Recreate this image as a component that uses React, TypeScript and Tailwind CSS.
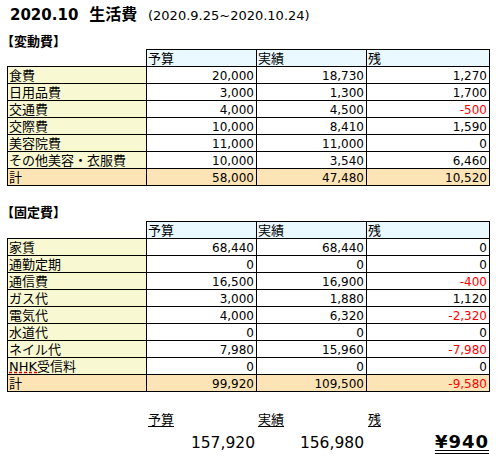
import React from "react";

type Row = { label: string; plan: string; actual: string; rest: string; neg?: boolean; spell?: boolean };

const variable: Row[] = [
  { label: "食費", plan: "20,000", actual: "18,730", rest: "1,270" },
  { label: "日用品費", plan: "3,000", actual: "1,300", rest: "1,700" },
  { label: "交通費", plan: "4,000", actual: "4,500", rest: "-500", neg: true },
  { label: "交際費", plan: "10,000", actual: "8,410", rest: "1,590" },
  { label: "美容院費", plan: "11,000", actual: "11,000", rest: "0" },
  { label: "その他美容・衣服費", plan: "10,000", actual: "3,540", rest: "6,460" },
];

const fixed: Row[] = [
  { label: "家賃", plan: "68,440", actual: "68,440", rest: "0" },
  { label: "通勤定期", plan: "0", actual: "0", rest: "0" },
  { label: "通信費", plan: "16,500", actual: "16,900", rest: "-400", neg: true },
  { label: "ガス代", plan: "3,000", actual: "1,880", rest: "1,120" },
  { label: "電気代", plan: "4,000", actual: "6,320", rest: "-2,320", neg: true },
  { label: "水道代", plan: "0", actual: "0", rest: "0" },
  { label: "ネイル代", plan: "7,980", actual: "15,960", rest: "-7,980", neg: true },
  { label: "NHK受信料", plan: "0", actual: "0", rest: "0", spell: true },
];

const cols = "grid grid-cols-[140px_110px_110px_123px]";
const cell = "h-[17px] border-b border-r border-black flex items-end leading-[13px]";

const Sheet = ({ rows, total }: { rows: Row[]; total: Row }) => (
  <div className="pl-[7px]">
    {/* header */}
    <div className={cols}>
      <div className="h-[18px] border-r border-b border-black" />
      {["予算", "実績", "残"].map((h) => (
        <div key={h} className="h-[18px] border-t border-r border-b border-black bg-[#eaf9ff] flex items-end pl-[1px] text-[13px] leading-[15px]">
          {h}
        </div>
      ))}
    </div>
    {[...rows, total].map((r, i) => {
      const isTotal = i === rows.length;
      const bg = isTotal ? "bg-[#fde4b6]" : "bg-white";
      return (
        <div key={r.label} className={cols}>
          <div className={`${cell} border-l pl-[1px] text-[13px] leading-[15px] whitespace-nowrap ${isTotal ? "bg-[#fde4b6]" : "bg-[#f8f8d3]"}`}>
            {r.spell ? (
              <span>
                <span className="underline decoration-dashed decoration-[#e00000] underline-offset-[1px]">NHK</span>受信料
              </span>
            ) : (
              r.label
            )}
          </div>
          <div className={`${cell} ${bg} justify-end pr-[2px]`}>{r.plan}</div>
          <div className={`${cell} ${bg} justify-end pr-[2px]`}>{r.actual}</div>
          <div className={`${cell} ${bg} justify-end pr-[2px] ${r.neg ? "text-[#ff0000]" : ""}`}>{r.rest}</div>
        </div>
      );
    })}
  </div>
);

export default function App() {
  return (
    <div className="w-[498px] h-[458px] bg-white overflow-hidden text-[12px] text-black font-['DejaVu_Sans','Noto_Sans_CJK_JP',sans-serif]">
      {/* title */}
      <div className="flex items-baseline pl-[10px] pt-[6px] h-[24px]">
        <div className="w-[138px] text-[15px] font-bold leading-[18px]">
          2020.10<span className="ml-[11px] text-[16px]">生活費</span>
        </div>
        <div className="text-[13px] leading-[16px]">(2020.9.25~2020.10.24)</div>
      </div>

      <div className="h-[25px] flex items-end pl-[1px] text-[13px] font-bold leading-[15px]">【変動費】</div>
      <Sheet rows={variable} total={{ label: "計", plan: "58,000", actual: "47,480", rest: "10,520" }} />

      <div className="h-[35px] flex items-end pl-[1px] text-[13px] font-bold leading-[16px]">【固定費】</div>
      <Sheet rows={fixed} total={{ label: "計", plan: "99,920", actual: "109,500", rest: "-9,580", neg: true }} />

      {/* summary */}
      <div className={`${cols} pl-[7px] h-[36px] items-end text-[13px] leading-[16px]`}>
        <div />
        <div className="pl-[1px]"><span className="underline underline-offset-[2px]">予算</span></div>
        <div className="pl-[1px]"><span className="underline underline-offset-[2px]">実績</span></div>
        <div className="pl-[1px]"><span className="underline underline-offset-[2px]">残</span></div>
      </div>
      <div className={`${cols} pl-[7px] h-[24px] items-end`}>
        <div />
        <div className="text-right pr-[2px] text-[15.5px] leading-[18px]">157,920</div>
        <div className="text-right pr-[3px] text-[15.5px] leading-[18px]">156,980</div>
        <div className="text-right pr-[1px] text-[18px] font-bold leading-[20px] tracking-[1px] underline decoration-double underline-offset-[2px]">
          ¥940
        </div>
      </div>
    </div>
  );
}
